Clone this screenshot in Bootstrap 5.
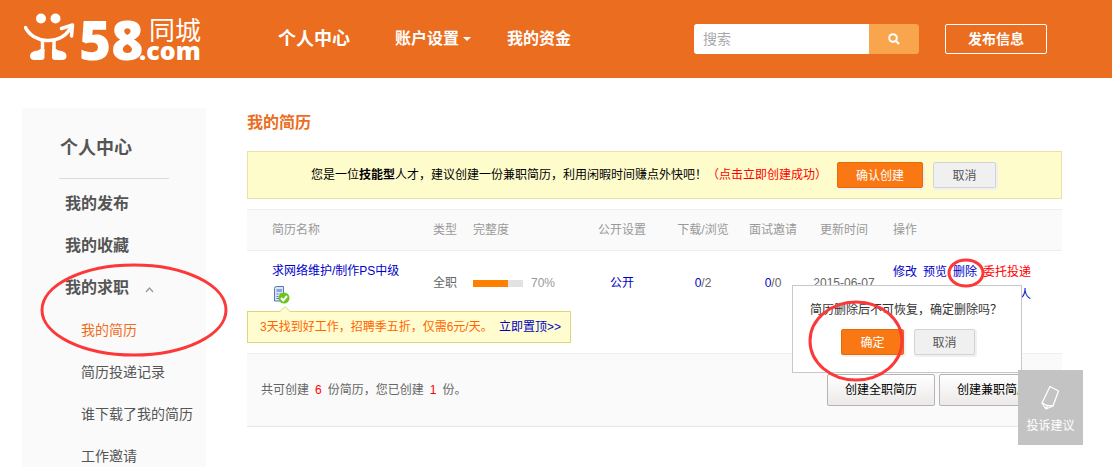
<!DOCTYPE html>
<html lang="zh-CN">
<head>
<meta charset="utf-8">
<meta name="viewport" content="width=device-width, initial-scale=1">
<title>58同城 - 我的简历</title>
<link href="https://cdn.jsdelivr.net/npm/bootstrap@5.3.0/dist/css/bootstrap.min.css" rel="stylesheet">
<style>
body{font:12px/20px "Liberation Sans","Noto Sans CJK SC",sans-serif;color:#666;background:#fff}
a{color:#0000c8;text-decoration:none}
.topbar{background:#eb6d1f;height:78px;padding:0 65px 0 24px}
.topbar a{color:#fff;font-weight:700;font-size:16px}
.topbar a.home{font-size:18px;margin-left:73px}
.topbar a.account{margin-left:45px}
.topbar a.money{margin-left:36px}
.caret{width:0;border:4px solid transparent;border-top-color:#fff;border-bottom:0}
.search{width:225px;height:30px}
.search .form-control{font-size:14px;line-height:20px;padding:4px 9px;border:0;border-radius:3px 0 0 3px;color:#555}
.search .form-control::placeholder{color:#a9a9a9}
.search .btn{width:50px;flex:none;background:#f9a54d;border:0;border-radius:0 3px 3px 0}
.topbar a.publish{width:102px;height:30px;line-height:28px;font-size:14px;border:1px solid #fff;border-radius:2px;margin-left:26px}
.shell{padding:30px 50px 0 22px;gap:41px}
.side{width:184px;background:#fafafa;padding-top:29px;line-height:22px}
.side h2{font-size:18px;font-weight:700;line-height:22px;color:#555;margin:0 0 19px 38px}
.side hr{margin:0 37px 14px;border-color:#bbb;opacity:.5}
.side li{height:22px;margin-bottom:20px}
.side li:last-child{margin-bottom:0}
.side li a{font-size:16px;font-weight:700;color:#555;margin-left:43px}
.side li.sub a{font-size:14px;font-weight:400;color:#555;margin-left:59px}
.side li.sub a.active{color:#f26c1c}
.mark-ring{position:absolute;pointer-events:none;fill:none;stroke:#fc3838;stroke-width:3;overflow:visible}
.main{min-width:0}
.main h1{font-size:16px;line-height:20px;font-weight:700;color:#eb6d1f;margin:5px 0 18px}
.notice{background:#fffccc;border:1px solid #eedfa8;height:48px;padding-left:63px;gap:10px;color:#000}
.notice a{color:#f00}
.act{font-size:12px;line-height:16px;height:26px;padding:5px 0 3px;border-radius:2px;box-shadow:1px 1px 1px 1px #f0f0f0}
.act-ok,.act-ok:hover{background:#f97814;border-color:#e76a05;color:#fff}
.act-no,.act-no:hover{background:#f0f0f0;border-color:#d4d4d4;color:#555}
.w86{width:86px}.w63{width:63px}
.resumes{table-layout:fixed;width:100%;margin-top:10px}
.resumes th{font-weight:400;color:#999;background:#fafafa;height:41px;border-top:1px solid #eee;border-bottom:1px solid #eee;padding:0}
.resumes td{padding:0;vertical-align:top}
.resumes .c-name{padding-left:25px;width:174px}
.resumes .c-ops{padding-left:7px}
.resumes td.mid{padding-top:22px}
.meter{width:50px;height:7px;background:#e2e2e2}
.meter div{height:7px;background:#ff8000}
.ops-line{gap:6px}
.confirm{position:absolute;left:-94px;top:34px;width:230px;height:88px;background:#fff;border:1px solid #c8c8c8;padding:14px 0 0 17px;color:#333;z-index:2}
.tip{width:324px;height:32px;line-height:30px;background:#fffccf;border:1px solid #dfd57a;color:#ff6600;padding:0 9px 0 12px;margin-bottom:10px}
.tip svg{position:absolute;left:31px;top:-6px}
.foot{background:#fafafa;border-top:1px solid #eee;border-bottom:1px solid #e6e6ea;height:74px;padding:0 15px 0 14px}
.foot b{color:#f00;font-weight:400;margin:0 6px}
.make{width:108px;height:32px;font-size:12px;line-height:20px;padding:5px 0;border-radius:2px;color:#000;border:1px solid #b4b4b4;background:linear-gradient(#fff,#ece9e8)}
.feedback{right:29px;bottom:22px;width:65px;height:75px;background:#c3c3c3;color:#fff;z-index:5;border:0;font-size:12px;line-height:20px;padding:0}
</style>
</head>
<body>
<div class="d-flex flex-column min-vh-100">
<header class="topbar d-flex align-items-center">
  <a href="#" aria-label="58同城"><svg class="d-block" width="181" height="78" viewBox="24 0 181 78" fill="#fff">
    <circle cx="41" cy="18.500" r="5"/><circle cx="55.500" cy="18.500" r="5"/>
    <path d="M25.500 27.500C33 43 59 46 70 29" fill="none" stroke="#fff" stroke-width="3.500" stroke-linecap="round"/>
    <path d="M61.500 28.500L72.500 25L71.500 36" fill="none" stroke="#fff" stroke-width="3.500" stroke-linejoin="round" stroke-linecap="round"/>
    <path d="M42.500 40V52M54 40V52" stroke="#fff" stroke-width="3.500"/>
    <path d="M40.500 49h4v8q0 3-3 3h-7q-4.500 0-4.500-4 0-5 8-5.500zM56 49h-4v8q0 3 3 3h7q4.500 0 4.500-4 0-5-8-5.500z"/>
    <text x="79" y="60" font-family="Open Sans" font-weight="800" font-size="55">58</text>
    <text x="139" y="60" font-family="Open Sans" font-weight="800" font-size="25">.com</text>
    <text x="149" y="40" font-family="Noto Sans CJK SC" font-weight="400" font-size="26">同城</text>
  </svg></a>
  <a class="home" href="#">个人中心</a>
  <a class="account d-flex align-items-center" href="#">账户设置<span class="caret ms-1"></span></a>
  <a class="money" href="#">我的资金</a>
  <form class="search d-flex ms-auto">
    <input class="form-control" type="text" placeholder="搜索" aria-label="搜索">
    <button class="btn p-0" type="button" aria-label="搜索"><svg class="d-block mx-auto" width="12" height="12" fill="none" stroke="#fff"><circle cx="5" cy="5" r="3.800" stroke-width="2"/><path d="M8 8l3 3" stroke-width="2.400"/></svg></button>
  </form>
  <a class="publish text-center" href="#">发布信息</a>
</header>

<div class="shell d-flex flex-grow-1">
  <nav class="side flex-shrink-0">
    <h2>个人中心</h2>
    <hr>
    <ul class="list-unstyled m-0">
      <li><a href="#">我的发布</a></li>
      <li><a href="#">我的收藏</a></li>
      <li class="position-relative"><a href="#">我的求职</a><svg class="ms-3" width="9" height="6" fill="none" stroke="#999"><path d="M1 5l3.500-4 3.500 4" stroke-width="1.300"/></svg>
        <svg class="mark-ring" style="left:19px;top:-12px" width="187" height="90"><ellipse cx="93" cy="45" rx="92" ry="45"/></svg></li>
      <li class="sub"><a class="active" href="#">我的简历</a></li>
      <li class="sub"><a href="#">简历投递记录</a></li>
      <li class="sub"><a href="#">谁下载了我的简历</a></li>
      <li class="sub"><a href="#">工作邀请</a></li>
    </ul>
  </nav>

  <main class="main flex-grow-1">
    <h1>我的简历</h1>
    <div class="notice d-flex align-items-center">
      <span>您是一位<b>技能型</b>人才，建议创建一份兼职简历，利用闲暇时间赚点外快吧！<a href="#">（点击立即创建成功）</a></span>
      <button class="btn act act-ok w86" type="button">确认创建</button>
      <button class="btn act act-no w63" type="button">取消</button>
    </div>

    <table class="resumes">
      <colgroup><col style="width:174px"><col style="width:48px"><col style="width:113px"><col style="width:80px"><col style="width:82px"><col style="width:58px"><col style="width:84px"><col></colgroup>
      <thead><tr>
        <th class="c-name">简历名称</th><th class="text-center">类型</th><th class="ps-1">完整度</th><th class="text-center">公开设置</th><th class="text-center">下载/浏览</th><th class="text-center">面试邀请</th><th class="text-center">更新时间</th><th class="c-ops">操作</th>
      </tr></thead>
      <tbody>
      <tr style="height:60px">
        <td class="c-name" style="padding-top:10px"><a href="#">求网络维护/制作PS中级</a>
          <svg class="d-block mt-1" width="18" height="20"><path d="M2.500 3.500q0-2 2-2h7v13q0 1.500-1.500 1.500h-7.500z" fill="#dce6f7" stroke="#5577b8"/><path d="M4.500 4h5.500v3h-5.500z" fill="#8ba6d9"/><path d="M4.500 9h2m1 0h2.500M4.500 11.500h2m1 0h2M4.500 13.500h3" stroke="#5577b8"/><circle cx="12" cy="13" r="5.500" fill="#6cc51c"/><path d="M9 13l2.300 2.500L15 11" fill="none" stroke="#fff" stroke-width="2"/></svg></td>
        <td class="mid text-center">全职</td>
        <td class="mid ps-1"><div class="d-flex align-items-center gap-2"><div class="meter"><div style="width:70%"></div></div><span style="color:#999">70%</span></div></td>
        <td class="mid text-center"><a href="#">公开</a></td>
        <td class="mid text-center"><a href="#">0</a>/2</td>
        <td class="mid text-center"><a href="#">0</a>/0</td>
        <td class="mid text-center">2015-06-07</td>
        <td class="c-ops position-relative" style="padding-top:11px">
          <div class="ops-line d-flex text-nowrap"><a href="#">修改</a><a href="#">预览</a><a class="position-relative" href="#">删除<svg class="mark-ring" style="left:-5px;top:-3px;z-index:3" width="36" height="28"><ellipse cx="18" cy="14" rx="17" ry="13"/></svg></a><a style="color:#f00" href="#">委托投递</a></div>
          <div class="text-end" style="width:138px;padding-top:3px"><a href="#">人</a></div>
          <div class="confirm" role="dialog" aria-label="删除简历">
            <div class="text-nowrap">简历删除后不可恢复，确定删除吗？</div>
            <div class="d-flex" style="padding:9px 0 0 31px;gap:10px"><button class="btn act act-ok w63" type="button">确定</button><button class="btn act act-no" style="width:61px" type="button">取消</button></div>
            <svg class="mark-ring" style="left:17px;top:15px" width="94" height="80"><ellipse cx="46" cy="40" rx="46" ry="39"/></svg>
          </div>
        </td>
      </tr>
      <tr><td colspan="8"><div class="tip position-relative d-flex justify-content-between text-nowrap"><svg width="12" height="7"><path d="M0 6.500L6 .500l6 6" fill="#fffccf" stroke="#dfd57a"/></svg><span>3天找到好工作，招聘季五折，仅需6元/天。</span><a href="#">立即置顶&gt;&gt;</a></div></td></tr>
      </tbody>
    </table>
    <div class="foot d-flex align-items-center justify-content-between">
      <span>共可创建<b>6</b>份简历，您已创建<b>1</b>份。</span>
      <div class="d-flex gap-1"><button class="btn make" type="button">创建全职简历</button><button class="btn make" type="button">创建兼职简历</button></div>
    </div>
  </main>
</div>
</div>
<button class="feedback position-fixed" type="button"><svg class="d-block mx-auto" width="22" height="36" fill="none" stroke="#fff" stroke-width="1.300" stroke-linejoin="round"><path d="M10 6.500l8.500 4.500-5.500 15-7 3-4-6z"/><path d="M2.500 23l4 2.500 6.500.500M5 28l3-1"/></svg>投诉建议</button>
<script src="https://cdn.jsdelivr.net/npm/bootstrap@5.3.0/dist/js/bootstrap.bundle.min.js"></script>
</body>
</html>
